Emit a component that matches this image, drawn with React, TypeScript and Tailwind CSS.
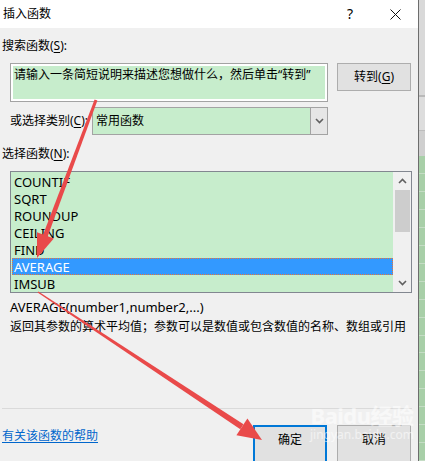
import React from "react";

const functions = ["COUNTIF", "SQRT", "ROUNDUP", "CEILING", "FIND", "AVERAGE", "IMSUB"];
const selected = "AVERAGE";
const gridRows = Array.from({ length: 17 }, (_, i) => i);

function Mnemonic({ ch }: { ch: string }) {
  return <span className="underline underline-offset-2">{ch}</span>;
}

function Chevron({ up }: { up?: boolean }) {
  return (
    <svg width="9" height="6" viewBox="0 0 9 6" className={up ? "rotate-180" : ""}>
      <path d="M1 1 L4.5 4.5 L8 1" fill="none" stroke="#606060" strokeWidth="1.6" />
    </svg>
  );
}

export default function App() {
  return (
    <div className="relative flex h-[461px] w-[425px] overflow-hidden bg-[#f0f0f0] font-['Noto_Sans','Noto_Sans_CJK_SC',sans-serif] text-[12px] leading-[16px] text-black">
      {/* dialog */}
      <div className="flex w-[418px] shrink-0 flex-col">
        <div className="flex h-[28px] shrink-0 items-center bg-white pl-[3px]">
          <span>插入函数</span>
          <span className="ml-auto mr-[37px] text-[14px]">?</span>
          <svg width="11" height="11" viewBox="0 0 11 11" className="mr-[17px]">
            <path d="M0.5 0.5 L10.5 10.5 M10.5 0.5 L0.5 10.5" stroke="#111" strokeWidth="1" />
          </svg>
        </div>

        <div className="flex flex-1 flex-col px-[2px]">
          <div className="mt-[10px]">
            搜索函数(<Mnemonic ch="S" />):
          </div>

          <div className="mt-[9px] flex items-start pl-[8px]">
            <div className="h-[39px] w-[318px] border border-[#a3a3a3] bg-white p-[2px]">
              <div className="h-full bg-[#c7edcc] pl-[1px] pt-[1px]">请输入一条简短说明来描述您想做什么，然后单击“转到”</div>
            </div>
            <button className="ml-[9px] flex h-[28px] w-[74px] items-center justify-center border border-[#adadad] bg-[#e1e1e1]">
              转到(<Mnemonic ch="G" />)
            </button>
          </div>

          <div className="mt-[5px] flex items-center pl-[8px]">
            <span className="w-[82px]">
              或选择类别(<Mnemonic ch="C" />):
            </span>
            <div className="flex h-[28px] w-[236px] border border-[#a3a3a3] bg-[#c7edcc]">
              <span className="flex-1 self-center pl-[3px]">常用函数</span>
              <div className="flex w-[17px] items-center justify-center border-l border-[#a3a3a3] bg-[#e6e6e6]">
                <Chevron />
              </div>
            </div>
          </div>

          <div className="mt-[11px]">
            选择函数(<Mnemonic ch="N" />):
          </div>

          <div className="ml-[8px] mt-[9px] flex h-[122px] w-[402px] border border-[#828790]">
            <div className="flex w-[382px] flex-col bg-[#c7edcc] pt-[1px] text-[13px]">
              {functions.map((f) => (
                <div
                  key={f}
                  className={
                    f === selected
                      ? "ml-[1px] flex h-[17px] items-center border border-dotted border-[#e8743a] bg-[#3399ff] pl-[1px] text-white"
                      : "flex h-[17px] items-center pl-[3px]"
                  }
                >
                  {f}
                </div>
              ))}
            </div>
            <div className="flex flex-1 flex-col items-center bg-[#f0f0f0]">
              <div className="flex h-[18px] items-center">
                <Chevron up />
              </div>
              <div className="w-[15px] flex-1 bg-[#cdcdcd]" />
              <div className="h-[42px]" />
              <div className="flex h-[18px] items-center">
                <Chevron />
              </div>
            </div>
          </div>

          <div className="ml-[8px] mt-[6px] text-[13px]">AVERAGE(number1,number2,...)</div>
          <div className="ml-[8px] mt-[4px]">返回其参数的算术平均值；参数可以是数值或包含数值的名称、数组或引用</div>

          <div className="mt-[73px] h-px w-[410px] bg-[#dadada]" />

          <div className="flex items-start">
            <a className="mt-[19px] text-[#0066cc] underline underline-offset-2">有关该函数的帮助</a>
            <button className="ml-auto mt-[16px] flex h-[38px] w-[74px] justify-center border-2 border-[#0078d7] bg-[#e1e1e1] pt-[5px]">
              确定
            </button>
            <button className="ml-[10px] mr-[5px] mt-[16px] flex h-[38px] w-[74px] justify-center border border-[#adadad] bg-[#e1e1e1] pt-[6px]">
              取消
            </button>
          </div>
        </div>
      </div>

      <div className="w-px shrink-0 bg-[#6d6d6d]" />

      {/* worksheet behind the dialog */}
      <div className="flex flex-1 flex-col">
        <div className="h-[95px] bg-[#d9d9d9]" />
        <div className="h-[2px] bg-[#b9b9b9]" />
        <div className="h-[34px] bg-[#dddddd]" />
        <div className="h-px bg-[#bdbdbd]" />
        <div className="h-[25px] bg-[#cfcfcf]" />
        {gridRows.map((r) => (
          <div key={r} className="h-[18px] border-b border-[#c4dcc4] bg-[#a8cfa8]" />
        ))}
      </div>

      {/* watermark */}
      <div className="pointer-events-none absolute left-[310px] top-[402px] flex flex-col items-center text-white/55">
        <span className="text-[22px] font-bold leading-[26px] tracking-tight">Baidu经验</span>
        <span className="text-[12px] leading-[14px]">jingyan.baidu.com</span>
      </div>

      {/* annotation arrows */}
      <svg className="pointer-events-none absolute left-0 top-0" width="425" height="461" viewBox="0 0 425 461">
        <polygon points="97.4,100.5 94.6,99.5 42.4,236.5 47,238.3" fill="#e94a4a" />
        <polygon points="37,258 53.8,238.6 37,232.3" fill="#e94a4a" />
        <polygon points="37.6,292.6 38.4,291.4 243.5,424.3 240.3,429.3" fill="#e94a4a" />
        <polygon points="262,440 236.4,435.2 247.4,418.4" fill="#e94a4a" />
      </svg>
    </div>
  );
}
